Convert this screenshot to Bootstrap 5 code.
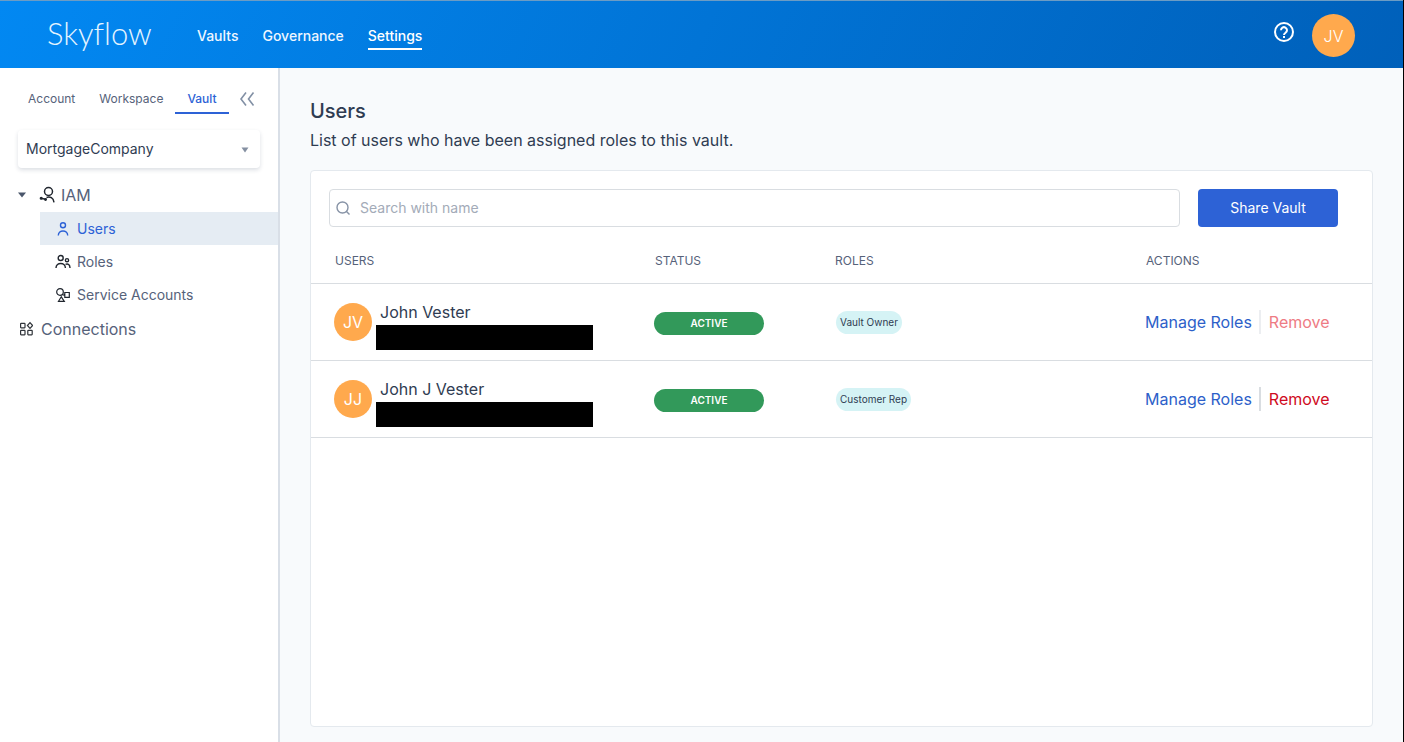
<!DOCTYPE html>
<html lang="en">
<head>
<meta charset="utf-8">
<meta name="viewport" content="width=device-width, initial-scale=1">
<title>Skyflow - Users</title>
<link href="https://cdn.jsdelivr.net/npm/bootstrap@5.3.0/dist/css/bootstrap.min.css" rel="stylesheet">
<style>
  :root { --ink: #2f3c52; --muted-ink: #56627a; --blue: #2d62d6; --line: #d9dde1; --orange: #ffa94d; }
  body { font-family: Inter, sans-serif; font-size: 16px; line-height: 24px; color: var(--ink); background: #f8fafc; border-right: 1px solid #000; }
  a { text-decoration: none; }
  .topbar { height: 68px; padding: 2px 48px 0 47px; border-top: 1px solid #6c9cc4; background: linear-gradient(115deg, #0288f2 0%, #0060ba 100%); }
  .brand { font-family: Lato, sans-serif; font-weight: 300; font-size: 31px; line-height: 36px; padding-bottom: 6px; color: #e4f4ff; width: 150px; font-variant-ligatures: none; }
  .topnav { gap: 24px; font-size: 14px; font-weight: 500; }
  .topnav a { color: #eef6ff; padding: 2px 0 0; border-bottom: 2px solid transparent; }
  .topnav a.active { border-color: #fff; color: #fff; }
  .avatar { display: flex; align-items: center; justify-content: center; flex: none; border-radius: 50%; background: var(--orange); color: #fff; border: 0; padding: 0; width: 38px; height: 38px; font-size: 16px; }
  .avatar-lg { width: 43px; height: 43px; font-weight: 300; }
  .plain { background: none; border: 0; padding: 0; line-height: 0; }
  .side { width: 280px; flex: none; background: #fff; border-right: 2px solid #d9dfe7; }
  .tabs { padding: 17px 16px 0; font-size: 12px; }
  .tabs a { padding: 2px 12px 1px; color: var(--muted-ink); border-bottom: 2px solid transparent; }
  .tabs a.active { color: var(--blue); border-color: var(--blue); font-weight: 500; }
  .vault { position: relative; margin: 16px 18px 9px; }
  .vault select { appearance: none; width: 100%; height: 38px; border: 0; border-radius: 4px; background: #fff; padding: 0 32px 0 8px; font-size: 14px; color: var(--ink); box-shadow: 0 2px 4px rgba(30,50,80,.16); }
  .vault svg { position: absolute; right: 10px; top: 16px; pointer-events: none; }
  .tree a { display: flex; align-items: center; color: var(--muted-ink); }
  .tree svg { flex: none; }
  .tree .top { height: 35px; padding-left: 18px; font-size: 16px; }
  .tree .sub { height: 33px; margin-left: 40px; padding-left: 15px; gap: 6px; font-size: 14px; }
  .tree .sub.active { color: var(--blue); background: #e5ecf3; }
  .content-area { padding: 31px 30px 15px; }
  h1 { font-size: 20px; line-height: 24px; font-weight: 500; margin: 0; color: var(--ink); }
  .intro { margin: 5px 0 18px; }
  .panel { background: #fff; border: 1px solid #e4e9ee; border-radius: 4px; }
  .tools { padding: 18px 34px 11px 18px; gap: 18px; }
  .search { position: relative; }
  .search svg { position: absolute; left: 6px; top: 11px; }
  .search input { height: 38px; font-size: 14px; padding: 0 12px 1px 30px; border: 1px solid var(--line); border-radius: 4px; }
  .search input::placeholder { color: #a3abb8; }
  .share { width: 140px; height: 38px; background: var(--blue); color: #fff; font-size: 14px; border-radius: 4px; padding: 0 0 1px; border: 0; }
  .grid-table { table-layout: fixed; width: 100%; }
  .grid-table th { height: 45px; padding: 2px 0 0 24px; font-size: 12px; font-weight: 400; color: var(--muted-ink); border-bottom: 1px solid var(--line); }
  .grid-table td { height: 77px; padding: 0 0 0 23px; border-bottom: 1px solid var(--line); vertical-align: middle; }
  .w-users { width: 320px; } .w-status { width: 180px; } .w-actions { width: 250px; }
  .who { padding: 6px 0 0 4px; }
  .redacted { width: 217px; height: 25px; background: #000; margin-top: 1px; }
  .status { display: block; width: 110px; height: 23px; line-height: 23px; border-radius: 12px; background: #32995a; color: #fff; font-size: 10px; font-weight: 600; text-align: center; margin-top: 3px; }
  .role { display: block; width: fit-content; height: 23px; line-height: 23px; border-radius: 12px; padding: 0 4px; margin: 2px 0 0 2px; background: #d5f3f5; font-size: 10px; }
  .act { background: none; border: 0; padding: 0; color: #2d5fc9; }
  .act.remove { color: #cf0a22; border-left: 2px solid var(--line); margin-left: 7px; padding-left: 8px; }
  .act.remove:disabled { color: #ee7b84; border-color: #eceef1; }
</style>
</head>
<body class="d-flex flex-column min-vh-100">
<header class="topbar d-flex align-items-center">
  <a class="brand" href="#">Skyflow</a>
  <nav class="topnav d-flex me-auto" aria-label="Main">
    <a href="#">Vaults</a><a href="#">Governance</a><a href="#" class="active">Settings</a>
  </nav>
  <button class="plain me-3 pb-1" aria-label="Help">
    <svg width="24" height="28" viewBox="0 0 24 28" fill="none" stroke="#fff" stroke-width="2"><circle cx="12" cy="12" r="9"/><path d="M9 10.200a3 3 0 1 1 4.600 2.500c-1 .7-1.600 1.100-1.600 2.300"/><path d="M12 16v2"/></svg>
  </button>
  <button class="avatar avatar-lg" aria-label="Account JV">JV</button>
</header>
<div class="d-flex flex-grow-1">
  <aside class="side">
    <nav class="tabs d-flex align-items-center" aria-label="Scope">
      <a href="#">Account</a><a href="#">Workspace</a><a href="#" class="active">Vault</a>
      <button class="plain ms-2 pb-1" aria-label="Collapse sidebar">
        <svg width="20" height="16" viewBox="0 0 20 16" fill="none" stroke="#8290a5" stroke-width="1.600"><path d="M9 2.500 4 9l5 6.500M16.500 2.500l-5 6.500 5 6.500"/></svg>
      </button>
    </nav>
    <div class="vault">
      <select aria-label="Vault"><option>MortgageCompany</option></select>
      <svg width="10" height="8" viewBox="0 0 10 8"><path d="M1.500 1.500h7L5 6.500z" fill="#8590a2"/></svg>
    </div>
    <nav class="tree" aria-label="Vault settings">
      <a class="top" href="#">
        <svg width="8" height="6" viewBox="0 0 8 6"><path d="M0 .5h8L4 5.500z" fill="#4a566b"/></svg>
        <svg class="me-1" width="31" height="18" viewBox="-14 0 31 18" fill="none" stroke="#20262e" stroke-width="1.500"><circle cx="8.500" cy="5.500" r="4"/><path d="M6.500 11.500c3.500-1.500 7 .5 7.500 4.800M1 12.200l5.500 1.300"/><circle cx="1.200" cy="12.200" r=".8" fill="#20262e"/><circle cx="5.500" cy="13.500" r=".7" fill="#20262e"/></svg>
        IAM
      </a>
      <a class="sub active" href="#">
        <svg width="16" height="16" viewBox="0 0 16 16" fill="none" stroke="currentColor" stroke-width="1.400"><circle cx="8" cy="4.300" r="2.500"/><path d="M3.300 14.500c0-6 9.400-6 9.400 0"/></svg>
        Users
      </a>
      <a class="sub" href="#">
        <svg width="16" height="16" viewBox="0 0 16 16" fill="none" stroke="#20262e" stroke-width="1.400"><circle cx="5.700" cy="4" r="2.500"/><path d="M1 14c0-6 9.400-6 9.400 0"/><circle cx="12" cy="6.200" r="1.600"/><path d="M10.500 10.300c2.500-1 4.500.5 4.500 3.700"/></svg>
        Roles
      </a>
      <a class="sub" href="#">
        <svg width="16" height="16" viewBox="0 0 16 16" fill="none" stroke="#20262e" stroke-width="1.200"><circle cx="5" cy="5" r="3.300"/><path d="M9.800 5.500h4.500v4.800H9.800zM6.300 9.800 3.500 14.300h5.800zM7.300 7.500l2.500 1"/></svg>
        Service Accounts
      </a>
      <a class="top" href="#">
        <svg class="me-2" width="15" height="16" viewBox="0 0 15 16" fill="none" stroke="#30343a" stroke-width="1.200"><rect x="2.600" y="2.400" width="4.400" height="4.400" rx=".5"/><path d="m12 1.600 2.600 2.900L12 7.400 9.400 4.500z"/><rect x="2.600" y="9.400" width="4.400" height="4.400" rx=".5"/><rect x="9.800" y="9.400" width="4.400" height="4.400" rx=".5"/></svg>
        Connections
      </a>
    </nav>
  </aside>
  <main class="content-area d-flex flex-column flex-grow-1">
    <h1>Users</h1>
    <p class="intro">List of users who have been assigned roles to this vault.</p>
    <section class="panel flex-grow-1">
      <div class="tools d-flex">
        <div class="search flex-grow-1">
          <svg width="16" height="16" viewBox="0 0 16 16" fill="none" stroke="#8793a6" stroke-width="1.400"><circle cx="7.500" cy="7.500" r="5.500"/><path d="m11.500 11.500 3 3"/></svg>
          <input type="search" class="form-control" placeholder="Search with name" aria-label="Search with name">
        </div>
        <button class="btn share">Share Vault</button>
      </div>
      <table class="grid-table">
        <thead><tr><th class="w-users">USERS</th><th class="w-status">STATUS</th><th>ROLES</th><th class="w-actions">ACTIONS</th></tr></thead>
        <tbody>
          <tr>
            <td><div class="d-flex align-items-center"><span class="avatar me-1">JV</span><div><div class="who">John Vester</div><div class="redacted"></div></div></div></td>
            <td><span class="status">ACTIVE</span></td>
            <td><span class="role">Vault Owner</span></td>
            <td><div class="d-flex"><button class="act">Manage Roles</button><button class="act remove" disabled>Remove</button></div></td>
          </tr>
          <tr>
            <td><div class="d-flex align-items-center"><span class="avatar me-1">JJ</span><div><div class="who">John J Vester</div><div class="redacted"></div></div></div></td>
            <td><span class="status">ACTIVE</span></td>
            <td><span class="role">Customer Rep</span></td>
            <td><div class="d-flex"><button class="act">Manage Roles</button><button class="act remove">Remove</button></div></td>
          </tr>
        </tbody>
      </table>
    </section>
  </main>
</div>
<script src="https://cdn.jsdelivr.net/npm/bootstrap@5.3.0/dist/js/bootstrap.bundle.min.js"></script>
</body>
</html>
